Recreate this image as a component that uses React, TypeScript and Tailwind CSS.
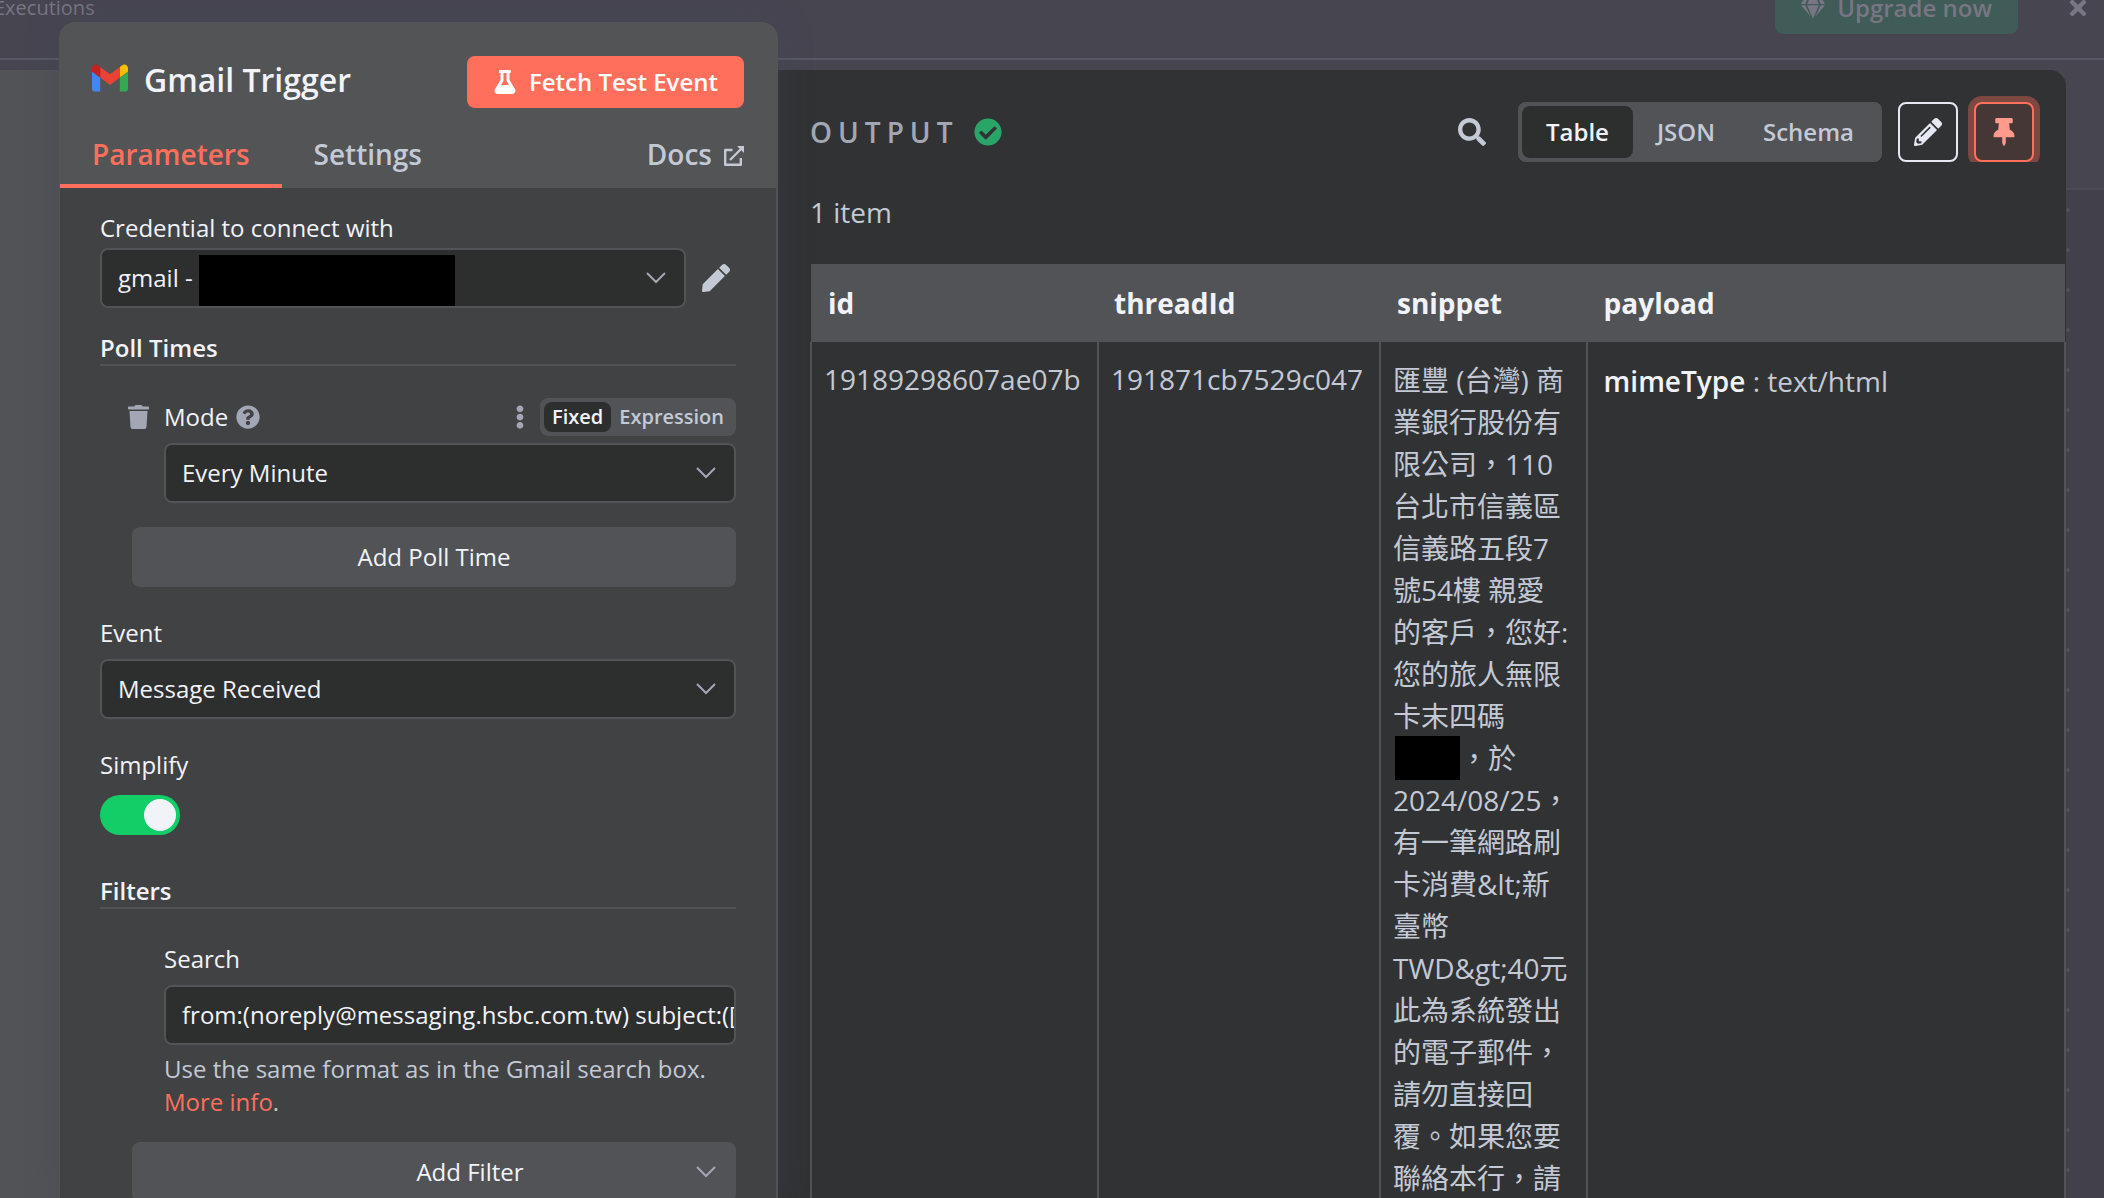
import { useState, type ReactNode } from 'react';
import {
	FaCheckCircle,
	FaEllipsisV,
	FaFlask,
	FaGem,
	FaPen,
	FaPencilAlt,
	FaQuestionCircle,
	FaSearch,
	FaThumbtack,
	FaTimes,
	FaTrash,
} from 'react-icons/fa';

const snippet =
	'，於 2024/08/25，有一筆網路刷卡消費&lt;新臺幣TWD&gt;40元 此為系統發出的電子郵件，請勿直接回覆。如果您要聯絡本行，請';

function GmailLogo() {
	return (
		<svg viewBox="52 41 88 68" className="h-8 w-9 pb-1" aria-hidden="true">
			<path fill="#4285f4" d="M58 108h14V74L52 59v43c0 3.32 2.69 6 6 6" />
			<path fill="#34a853" d="M120 108h14c3.32 0 6-2.69 6-6V59l-20 15" />
			<path fill="#fbbc04" d="M120 48v26l20-15v-8c0-7.42-8.47-11.65-14.4-7.2" />
			<path fill="#ea4335" d="M72 74V48l24 18 24-18v26L96 92" />
			<path fill="#c5221f" d="M52 51v8l20 15V48l-5.6-4.2c-5.94-4.45-14.4-.22-14.4 7.2" />
		</svg>
	);
}

function ExternalLinkIcon() {
	return (
		<svg
			viewBox="0 0 20 20"
			className="mt-1 size-5"
			fill="none"
			stroke="currentColor"
			strokeWidth="2.4"
			strokeLinejoin="round"
			aria-hidden="true"
		>
			<path d="M8.5 4H1.2v14.8h15.6V12M6 14 17 3" />
			<path d="M13 0h7v7l-2.2-2.2-2.6-2.6z" fill="currentColor" stroke="none" />
		</svg>
	);
}

function Chevron() {
	return (
		<svg viewBox="0 0 20 12" className="h-3 w-5 shrink-0" fill="none" stroke="#a3a7b5" strokeWidth="2" aria-hidden="true">
			<path d="m1 1 9 9 9-9" />
		</svg>
	);
}

type SelectBoxProps = {
	id: string;
	value: string;
	children?: ReactNode;
};

function SelectBox({ id, value, children }: SelectBoxProps) {
	return (
		<div className="relative flex h-15 min-w-0 flex-1 items-center rounded-lg border-2 border-[#525356] bg-[#2d2e2e]">
			<select
				id={id}
				className="h-full w-full appearance-none px-4 text-2xl text-[#f1f3f9] outline-none"
			>
				<option>{value}</option>
			</select>
			{children}
			<span className="pointer-events-none absolute right-4.5 flex">
				<Chevron />
			</span>
		</div>
	);
}

function SectionTitle({ children }: { children: ReactNode }) {
	return (
		<h2 className="border-b-2 border-[#525356] text-2xl leading-8 font-semibold text-[#f1f3f9]">
			{children}
		</h2>
	);
}

function NodePanel() {
	const [simplify, setSimplify] = useState(true);

	return (
		<section className="relative z-10 flex w-[719px] shrink-0 flex-col overflow-hidden rounded-t-2xl bg-[#525456] shadow-[0_0_32px_rgba(70,69,90,0.4)]">
			<header className="flex h-[166px] shrink-0 flex-col justify-between">
				<div className="flex items-start justify-between pt-[34px] pr-[34px] pl-[33px]">
					<div className="flex h-12 items-center gap-4">
						<GmailLogo />
						<h1 className="text-[32px] leading-10 font-semibold text-[#f1f3f9]">Gmail Trigger</h1>
					</div>
					<button
						type="button"
						className="flex h-[52px] items-center gap-3 rounded-lg bg-[#ff6f5c] px-[26px] text-2xl font-semibold text-white"
					>
						<FaFlask className="size-6" />
						Fetch Test Event
					</button>
				</div>
				<nav className="flex items-stretch text-[28px] leading-9 font-semibold text-[#c3c9d5]">
					<a href="#parameters" className="ml-px border-b-4 border-[#ff6f5c] px-8 pb-3 text-[#ff6f5c]">
						Parameters
					</a>
					<a href="#settings" className="px-8">
						Settings
					</a>
					<a href="#docs" className="mr-[34px] ml-auto flex items-center gap-3 self-start">
						Docs <ExternalLinkIcon />
					</a>
				</nav>
			</header>

			<div className="ml-px flex-1 border-r-2 border-[#525356] bg-[#414244] px-10 text-2xl text-[#f1f3f9]">
				<label htmlFor="credential" className="mt-6 block leading-8">
					Credential to connect with
				</label>
				<div className="mt-1 flex items-center gap-4">
					<SelectBox id="credential" value="gmail -">
						<span className="absolute top-[5px] left-[97px] h-[51px] w-64 bg-black" />
					</SelectBox>
					<button type="button" aria-label="Edit credential" className="mr-1.5 text-[#c3c9d5]">
						<FaPen className="size-7" />
					</button>
				</div>

				<div className="mt-6">
					<SectionTitle>Poll Times</SectionTitle>
				</div>
				<div className="mt-8 flex h-[38px] items-center pl-7">
					<button type="button" aria-label="Delete poll time" className="text-[#a3a7b5]">
						<FaTrash className="h-6 w-[21px]" />
					</button>
					<label htmlFor="mode" className="ml-[15px]">
						Mode
					</label>
					<FaQuestionCircle className="ml-2 size-6 text-[#a3a7b5]" />
					<button type="button" aria-label="Options" className="mr-2 ml-auto text-[#a3a7b5]">
						<FaEllipsisV className="size-6" />
					</button>
					<div className="flex h-full items-center rounded-lg bg-[#525356] p-1 text-xl font-semibold">
						<button type="button" className="h-full rounded-lg bg-[#2d2e2e] px-2 leading-7">
							Fixed
						</button>
						<button type="button" className="px-2 leading-7 text-[#c3c9d5]">
							Expression
						</button>
					</div>
				</div>
				<div className="mt-[7px] flex pl-16">
					<SelectBox id="mode" value="Every Minute" />
				</div>
				<div className="mt-6 pl-8">
					<button type="button" className="h-15 w-full rounded-lg bg-[#525356]">
						Add Poll Time
					</button>
				</div>

				<label htmlFor="event" className="mt-[30px] block leading-8">
					Event
				</label>
				<div className="mt-2.5 flex">
					<SelectBox id="event" value="Message Received" />
				</div>

				<label htmlFor="simplify" className="mt-[30px] block leading-8">
					Simplify
				</label>
				<div className="mt-3.5 flex">
					<input
						id="simplify"
						type="checkbox"
						role="switch"
						checked={simplify}
						onChange={(e) => setSimplify(e.target.checked)}
						className="h-10 w-20 appearance-none rounded-full bg-[#7b7d84] p-1 before:block before:size-8 before:rounded-full before:bg-[#f1f3f9] checked:bg-[#13ce66] checked:before:ml-10"
					/>
				</div>

				<div className="mt-10">
					<SectionTitle>Filters</SectionTitle>
				</div>
				<div className="mt-[34px] pl-16">
					<label htmlFor="search" className="block leading-8">
						Search
					</label>
					<div className="mt-2.5 flex h-15 rounded-lg border-2 border-[#525356] bg-[#2d2e2e] pl-4">
						<input
							id="search"
							type="text"
							defaultValue="from:(noreply@messaging.hsbc.com.tw) subject:([信用卡消費通知])"
							className="w-full min-w-0 outline-none"
						/>
					</div>
					<p className="mt-[7px] leading-[33px] text-[#c3c9d5]">
						Use the same format as in the Gmail search box.{' '}
						<a href="#more-info" className="text-[#ff6f5c]">
							More info
						</a>
						.
					</p>
				</div>
				<div className="mt-6 pl-8">
					<button type="button" className="flex h-15 w-full items-center rounded-lg bg-[#525356] pr-5 pl-28">
						<span className="flex-1 text-center">Add Filter</span>
						<Chevron />
					</button>
				</div>
			</div>
		</section>
	);
}

function OutputTable() {
	return (
		<table className="w-full border-collapse text-left text-[28px] leading-[42px] text-[#c3c9d5]">
			<thead className="bg-[#525356] font-bold text-[#f1f3f9]">
				<tr className="h-[78px]">
					<th className="w-[287px] pl-[17px]">id</th>
					<th className="w-[282px] pl-4">threadId</th>
					<th className="w-[206px] pl-[17px]">snippet</th>
					<th className="pl-[17px]">payload</th>
				</tr>
			</thead>
			<tbody>
				<tr className="h-[1000px] align-top">
					<td className="border-2 border-t-0 border-[#525356] pt-4 pl-3">19189298607ae07b</td>
					<td className="border-2 border-t-0 border-[#525356] pt-4 pl-3">191871cb7529c047</td>
					<td lang="zh-TW" className="border-2 border-t-0 border-[#525356] pt-[17px] pr-4 pl-3">
						匯豐 (台灣) 商業銀行股份有限公司，110台北市信義區信義路五段7號54樓 親愛的客戶，您好:您的旅人無限卡末四碼{' '}
						<span className="-mt-3 -mb-1 ml-0.5 inline-block h-11 w-[65px] bg-black align-middle" />
						{snippet}
					</td>
					<td className="border-2 border-t-0 border-[#525356] pt-[18px] pl-4">
						<strong className="font-semibold text-[#f1f3f9]">mimeType</strong> : text/html
					</td>
				</tr>
			</tbody>
		</table>
	);
}

function OutputPanel() {
	return (
		<section className="mt-[70px] flex min-w-0 flex-1 flex-col overflow-hidden rounded-tr-2xl bg-[#313234]">
			<header className="flex items-end pt-[26px] pr-[26px] pl-8 text-[#c3c9d5]">
				<div className="flex h-15 items-center gap-4">
					<h2 className="text-[28px] font-semibold tracking-[6px] text-[#a3a7b5]">OUTPUT</h2>
					<FaCheckCircle className="size-7 text-[#29a568]" />
				</div>
				<button type="button" aria-label="Search" className="mr-8 ml-auto h-15">
					<FaSearch className="size-7" />
				</button>
				<div className="flex h-15 rounded-lg bg-[#525356] p-1 text-2xl font-semibold">
					<button type="button" className="rounded-lg bg-[#2d2e2e] px-6 text-[#f1f3f9]">
						Table
					</button>
					<button type="button" className="px-6">
						JSON
					</button>
					<button type="button" className="px-6">
						Schema
					</button>
				</div>
				<button
					type="button"
					aria-label="Edit output"
					className="ml-4 flex size-15 items-center justify-center rounded-lg border-2 border-[#e6e9f3] text-[#e6e9f3]"
				>
					<FaPencilAlt className="size-7" />
				</button>
				<div className="ml-2.5 overflow-hidden px-1.5 pt-1.5">
					<button
						type="button"
						aria-label="Pin data"
						className="flex size-15 items-center justify-center rounded-lg border-2 border-[#ff6f5c] bg-[#463737] text-[#ff9a8c] shadow-[0_0_0_6px_#7c4840]"
					>
						<FaThumbtack className="size-7" />
					</button>
				</div>
			</header>
			<p className="mt-[29px] pl-8 text-[28px] leading-[42px] text-[#c3c9d5]">1 item</p>
			<div className="mt-[31px] pl-8">
				<OutputTable />
			</div>
		</section>
	);
}

export default function App() {
	return (
		<main className="relative h-screen overflow-hidden bg-[#41404b] font-['Open_Sans','Noto_Sans_CJK_TC',sans-serif]">
			<div className="flex h-15 items-start justify-between border-b-2 border-[#595866] bg-[#464550] text-[#787683]">
				<span className="-ml-1.5 text-xl leading-4">Executions</span>
				<div className="flex items-start">
					<button
						type="button"
						className="-mt-[18px] flex h-[52px] items-center gap-3 rounded-lg bg-[#405c58] px-[26px] text-2xl font-semibold"
					>
						<FaGem className="size-6" />
						Upgrade now
					</button>
					<button type="button" aria-label="Close" className="mr-3.5 ml-12">
						<FaTimes className="-mt-1 size-6" />
					</button>
				</div>
			</div>
			<div className="h-[130px] border-b-2 border-[#4b4a56] bg-[#464550]" />
			<div className="h-full bg-[radial-gradient(circle_at_2px_2px,#504f5b_2px,transparent_2px)] bg-[size:40px_40px] bg-[position:26px_18px]" />
			<div className="absolute inset-x-0 top-0 flex h-full pr-[38px]">
				<div className="mt-[70px] w-[59px] shrink-0 bg-[#525356]" />
				<div className="flex pt-[22px]">
					<NodePanel />
				</div>
				<OutputPanel />
			</div>
		</main>
	);
}
